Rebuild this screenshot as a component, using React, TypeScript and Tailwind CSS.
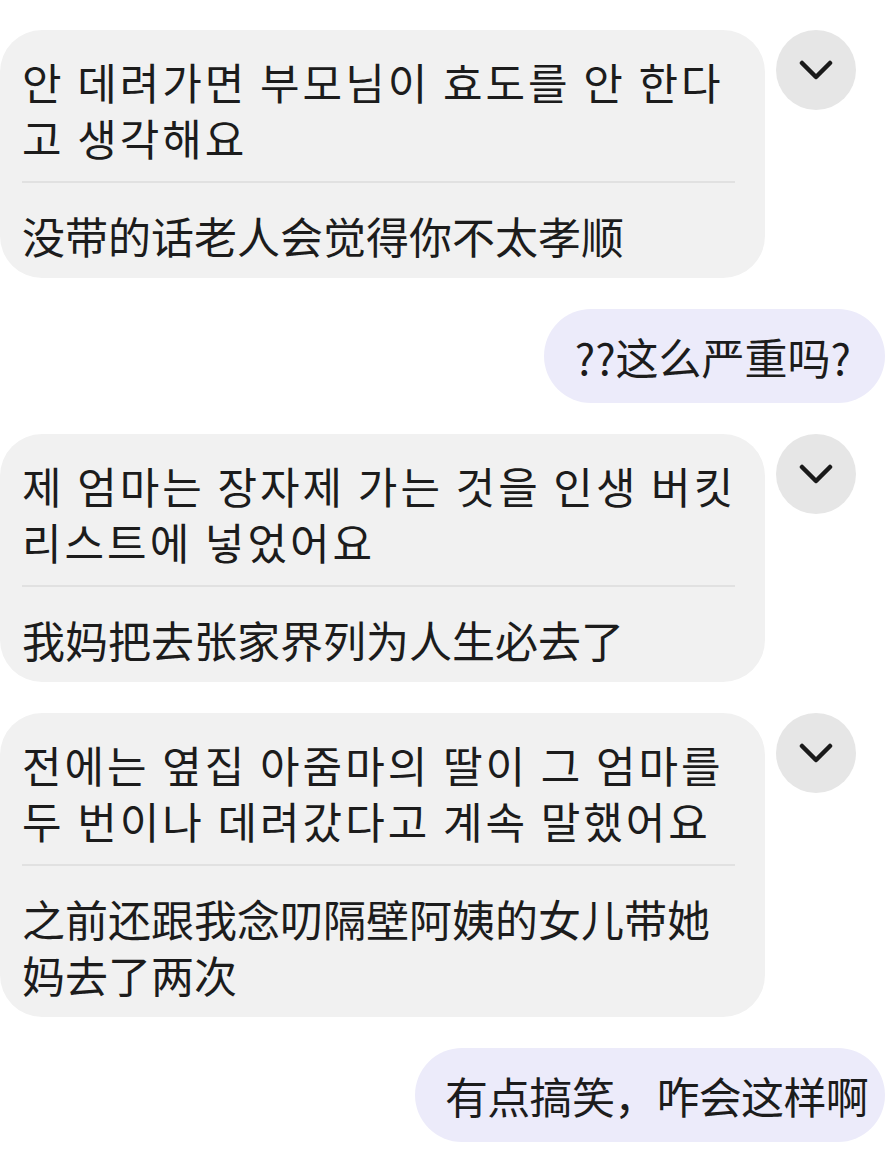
import React from "react";

const KR = { fontFamily: '"Noto Sans CJK KR", "Noto Sans CJK SC", sans-serif' };
const SC = { fontFamily: '"Noto Sans CJK SC", "Noto Sans CJK KR", sans-serif' };

function Chevron() {
  return (
    <div className="ml-[11px] flex h-[80px] w-[80px] shrink-0 items-center justify-center rounded-full bg-[#e6e6e6]">
      <svg width="34" height="20" viewBox="0 0 34 20" fill="none">
        <polyline
          points="3,3 17,17 31,3"
          stroke="#1a1a1a"
          strokeWidth="4.5"
          strokeLinecap="round"
          strokeLinejoin="round"
        />
      </svg>
    </div>
  );
}

function LeftBubble({ kr, zh }: { kr: string[]; zh: string[] }) {
  return (
    <div className="flex items-start">
      <div className="w-[765px] shrink-0 rounded-[42px] bg-[#f1f1f1] pb-[15px] pl-[22px] pr-[30px] pt-[23px] text-[43px] leading-[56px] text-[#1c1c1c]">
        <div style={KR} className="tracking-[3px]">
          {kr.map((l, i) => (
            <div key={i} className="whitespace-nowrap">
              {l}
            </div>
          ))}
        </div>
        <div className="mb-[24px] mt-[16px] h-[2px] bg-[#e1e1e1]" />
        <div style={SC}>
          {zh.map((l, i) => (
            <div key={i} className="whitespace-nowrap">
              {l}
            </div>
          ))}
        </div>
      </div>
      <Chevron />
    </div>
  );
}

function RightBubble({ text, pad }: { text: string; pad: string }) {
  return (
    <div className="flex justify-end pr-[3px]">
      <div
        className={`rounded-full bg-[#ecebfa] py-[19px] text-[43px] leading-[56px] text-[#1c1c1c] whitespace-nowrap ${pad}`}
        style={SC}
      >
        {text}
      </div>
    </div>
  );
}

export default function App() {
  return (
    <div className="flex h-[1171px] w-[888px] flex-col gap-[31px] overflow-hidden bg-white pt-[30px]">
      <LeftBubble
        kr={["안 데려가면 부모님이 효도를 안 한다", "고 생각해요"]}
        zh={["没带的话老人会觉得你不太孝顺"]}
      />
      <RightBubble text="??这么严重吗?" pad="pl-[31px] pr-[34px]" />
      <LeftBubble
        kr={["제 엄마는 장자제 가는 것을 인생 버킷", "리스트에 넣었어요"]}
        zh={["我妈把去张家界列为人生必去了"]}
      />
      <LeftBubble
        kr={["전에는 옆집 아줌마의 딸이 그 엄마를", "두 번이나 데려갔다고 계속 말했어요"]}
        zh={["之前还跟我念叨隔壁阿姨的女儿带她", "妈去了两次"]}
      />
      <RightBubble text="有点搞笑，咋会这样啊" pad="pl-[30px] pr-[17px] tracking-[-0.7px]" />
    </div>
  );
}
